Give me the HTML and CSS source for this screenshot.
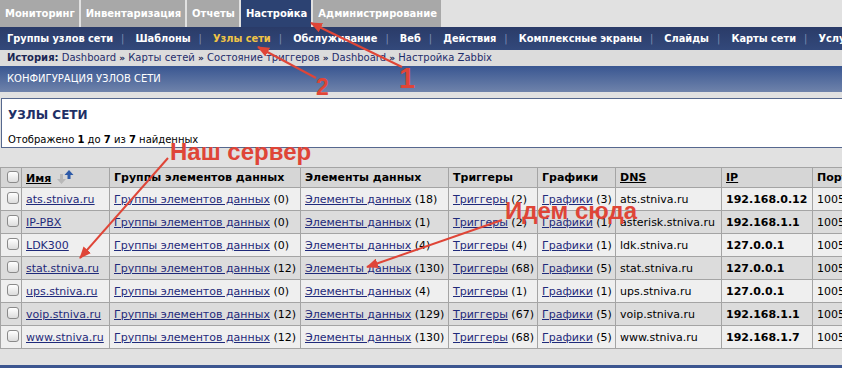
FILE: index.html
```html
<!DOCTYPE html>
<html lang="ru">
<head>
    <meta charset="UTF-8">
    <title>Конфигурация узлов сети</title>
    <link rel="stylesheet" href="styles.css">
</head>
<body>
    <div class="tabs">
        <a class="tab">Мониторинг</a>
        <a class="tab">Инвентаризация</a>
        <a class="tab">Отчеты</a>
        <a class="tab active">Настройка</a>
        <a class="tab">Администрирование</a>
    </div>

    <div class="submenu">
        <a>Группы узлов сети</a><span class="sep">|</span>
        <a>Шаблоны</a><span class="sep">|</span>
        <a class="current">Узлы сети</a><span class="sep">|</span>
        <a>Обслуживание</a><span class="sep">|</span>
        <a>Веб</a><span class="sep">|</span>
        <a>Действия</a><span class="sep">|</span>
        <a>Комплексные экраны</a><span class="sep">|</span>
        <a>Слайды</a><span class="sep">|</span>
        <a>Карты сети</a><span class="sep">|</span>
        <a>Услуги</a>
    </div>

    <div class="history">
        <b>История:</b>
        <a>Dashboard</a> <b class="raquo">»</b>
        <a>Карты сетей</a> <b class="raquo">»</b>
        <a>Состояние триггеров</a> <b class="raquo">»</b>
        <a>Dashboard</a> <b class="raquo">»</b>
        <a>Настройка Zabbix</a>
    </div>

    <div class="page-header">КОНФИГУРАЦИЯ УЗЛОВ СЕТИ</div>

    <div class="hosts-box">
        <h2>УЗЛЫ СЕТИ</h2>
        <p>Отображено <b>1</b> до <b>7</b> из <b>7</b> найденных</p>
    </div>

    <table class="hosts">
        <colgroup>
            <col style="width:21px">
            <col style="width:88px">
            <col style="width:191px">
            <col style="width:148px">
            <col style="width:89px">
            <col style="width:78px">
            <col style="width:106px">
            <col style="width:91px">
            <col style="width:80px">
        </colgroup>
        <thead>
            <tr>
                <th><span class="cb"></span></th>
                <th><a>Имя</a>
                    <svg class="sort" width="18" height="14" viewBox="0 0 18 14">
                        <path d="M3 4h3v5h3l-4.5 5L0 9h3z" fill="#b8b8b8"/>
                        <path d="M12 0l4.5 5h-3v4h-3V5h-3z" fill="#2d5aa8"/>
                    </svg>
                </th>
                <th>Группы элементов данных</th>
                <th>Элементы данных</th>
                <th>Триггеры</th>
                <th>Графики</th>
                <th><a>DNS</a></th>
                <th><a>IP</a></th>
                <th>Порт</th>
            </tr>
        </thead>
        <tbody>
            <tr>
                <td><span class="cb"></span></td>
                <td><a>ats.stniva.ru</a></td>
                <td><a>Группы элементов данных</a> (0)</td>
                <td><a>Элементы данных</a> (18)</td>
                <td><a>Триггеры</a> (2)</td>
                <td><a>Графики</a> (3)</td>
                <td>ats.stniva.ru</td>
                <td><b>192.168.0.12</b></td>
                <td>10050</td>
            </tr>
            <tr>
                <td><span class="cb"></span></td>
                <td><a>IP-PBX</a></td>
                <td><a>Группы элементов данных</a> (0)</td>
                <td><a>Элементы данных</a> (1)</td>
                <td><a>Триггеры</a> (2)</td>
                <td><a>Графики</a> (1)</td>
                <td>asterisk.stniva.ru</td>
                <td><b>192.168.1.1</b></td>
                <td>10050</td>
            </tr>
            <tr>
                <td><span class="cb"></span></td>
                <td><a>LDK300</a></td>
                <td><a>Группы элементов данных</a> (0)</td>
                <td><a>Элементы данных</a> (4)</td>
                <td><a>Триггеры</a> (4)</td>
                <td><a>Графики</a> (1)</td>
                <td>ldk.stniva.ru</td>
                <td><b>127.0.0.1</b></td>
                <td>10050</td>
            </tr>
            <tr>
                <td><span class="cb"></span></td>
                <td><a>stat.stniva.ru</a></td>
                <td><a>Группы элементов данных</a> (12)</td>
                <td><a>Элементы данных</a> (130)</td>
                <td><a>Триггеры</a> (68)</td>
                <td><a>Графики</a> (5)</td>
                <td>stat.stniva.ru</td>
                <td><b>127.0.0.1</b></td>
                <td>10050</td>
            </tr>
            <tr>
                <td><span class="cb"></span></td>
                <td><a>ups.stniva.ru</a></td>
                <td><a>Группы элементов данных</a> (0)</td>
                <td><a>Элементы данных</a> (4)</td>
                <td><a>Триггеры</a> (1)</td>
                <td><a>Графики</a> (1)</td>
                <td>ups.stniva.ru</td>
                <td><b>127.0.0.1</b></td>
                <td>10050</td>
            </tr>
            <tr>
                <td><span class="cb"></span></td>
                <td><a>voip.stniva.ru</a></td>
                <td><a>Группы элементов данных</a> (12)</td>
                <td><a>Элементы данных</a> (129)</td>
                <td><a>Триггеры</a> (67)</td>
                <td><a>Графики</a> (5)</td>
                <td>voip.stniva.ru</td>
                <td><b>192.168.1.1</b></td>
                <td>10050</td>
            </tr>
            <tr>
                <td><span class="cb"></span></td>
                <td><a>www.stniva.ru</a></td>
                <td><a>Группы элементов данных</a> (12)</td>
                <td><a>Элементы данных</a> (130)</td>
                <td><a>Триггеры</a> (68)</td>
                <td><a>Графики</a> (5)</td>
                <td>www.stniva.ru</td>
                <td><b>192.168.1.7</b></td>
                <td>10050</td>
            </tr>
        </tbody>
    </table>

    <div class="footer-bar"></div>

    <!-- red notes drawn on top of the screenshot -->
    <svg class="notes" width="842" height="368" viewBox="0 0 842 368">
        <defs>
            <marker id="head" viewBox="0 0 12 10" refX="11" refY="5" markerWidth="6" markerHeight="5" orient="auto">
                <path d="M0 0L12 5L0 10z" fill="#df4537"/>
            </marker>
        </defs>
        <g stroke="#df4537" stroke-width="2" marker-end="url(#head)">
            <line x1="402" y1="67" x2="311" y2="23"/>
            <line x1="316" y1="78" x2="258" y2="47"/>
            <line x1="168" y1="158" x2="80" y2="258"/>
            <line x1="502" y1="220" x2="367" y2="267"/>
        </g>
        <g class="note-text">
            <text x="399" y="88" font-size="29">1</text>
            <text x="316" y="95" font-size="23">2</text>
            <text x="170" y="160" font-size="24">Наш сервер</text>
            <text x="505" y="219" font-size="24">Идем сюда</text>
        </g>
    </svg>
</body>
</html>
```

FILE: styles.css
```css
html, body {
    overflow: hidden;
}
body {
    margin: 0;
    position: relative;
    width: 842px;
    height: 368px;
    background: #e1e1e1;
    font-family: "DejaVu Sans", Verdana, sans-serif;
    font-size: 11px;
    color: #000;
}
a {
    color: #1f2a7a;
    text-decoration: underline;
}

/* top tabs */
.tabs {
    display: flex;
    height: 27px;
    background: #e1e1e1;
}
.tab {
    display: block;
    padding: 0 4px 0 5px;
    margin-right: 2px;
    line-height: 27px;
    background: #a8a8a8;
    color: #fff;
    font-size: 10px;
    font-weight: bold;
    text-decoration: none;
}
.tab.active {
    background: #2c4272;
}

/* sub menu */
.submenu {
    height: 23px;
    line-height: 23px;
    padding-left: 7px;
    background: linear-gradient(#2a3b68, #33497b);
    font-size: 9.8px;
    white-space: nowrap;
}
.submenu a {
    color: #fff;
    font-weight: bold;
    text-decoration: none;
}
.submenu a.current {
    color: #f0c445;
}
.submenu .sep {
    color: #7d8db3;
    margin: 0 8px;
}

/* history line */
.history {
    height: 16px;
    line-height: 16px;
    padding-left: 7px;
    background: #dcdcdc;
    color: #1b2653;
    font-size: 10px;
    white-space: nowrap;
}
.history a {
    color: #1f2d6b;
    text-decoration: none;
}
.history .raquo {
    font-size: 9px;
}

.page-header {
    height: 26px;
    line-height: 26px;
    padding-left: 7px;
    background: linear-gradient(#395691, #6f83ab);
    color: #fff;
    font-size: 10px;
}

/* found hosts box */
.hosts-box {
    margin: 6px 0 0 1px;
    height: 48px;
    padding: 0 6px;
    background: #fff;
    border: 1px solid #56688e;
    border-right: none;
}
.hosts-box h2 {
    margin: 8px 0 0;
    font-size: 12px;
    line-height: 16px;
    color: #1e2f66;
}
.hosts-box p {
    margin: 11px 0 0;
    font-size: 10px;
}

/* hosts table */
.hosts {
    margin-top: 19px;
    width: 892px;
    table-layout: fixed;
    border-collapse: collapse;
    white-space: nowrap;
}
.hosts th,
.hosts td {
    border: 1px solid #a4a4a4;
    padding: 0 4px;
    text-align: left;
    overflow: hidden;
}
.hosts th {
    height: 19px;
    background: #d6d6d6;
    font-weight: bold;
}
.hosts th a {
    color: #000;
}
.hosts td {
    height: 22px;
}
.hosts tbody tr:nth-child(odd) td {
    background: #efefef;
}
.hosts tbody tr:nth-child(even) td {
    background: #dcdcdc;
}
.sort {
    vertical-align: -2px;
    margin-left: 2px;
}
.cb {
    display: inline-block;
    width: 10px;
    height: 10px;
    margin-left: 2px;
    vertical-align: -1px;
    border: 1px solid #8a8a8a;
    border-radius: 3px;
    background: linear-gradient(#ffffff, #dcdcdc);
}

.footer-bar {
    position: absolute;
    left: 0;
    right: 0;
    top: 365px;
    height: 3px;
    background: #3c5690;
}

/* annotations */
.notes {
    position: absolute;
    top: 0;
    left: 0;
    pointer-events: none;
}
.note-text text {
    font-family: "Liberation Sans", Arial, sans-serif;
    font-weight: bold;
    fill: #df4537;
}
```
